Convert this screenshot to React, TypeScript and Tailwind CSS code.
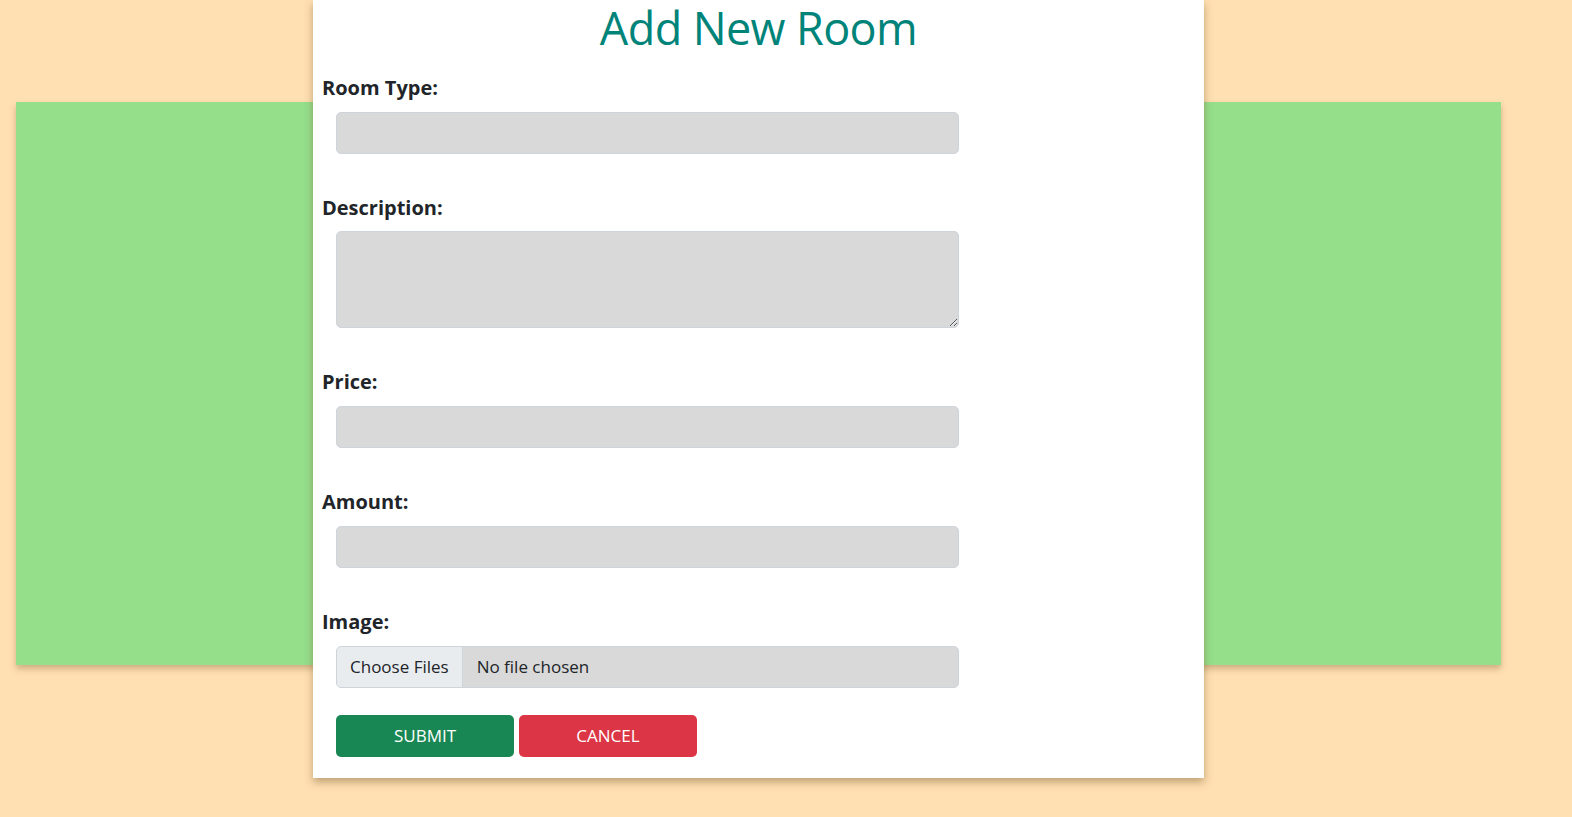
import React from 'react';

const font = { fontFamily: '"Open Sans", "Noto Sans", sans-serif' };

function Field({ label, children }: { label: string; children: React.ReactNode }) {
  return (
    <div className="flex flex-col">
      <label className="text-[20px] leading-[24px] font-bold text-[#212529]">{label}</label>
      <div className="mt-[12px] ml-[14px] w-[623px]">{children}</div>
    </div>
  );
}

const inputCls =
  'block w-full h-[42px] rounded-[5px] border border-[#ced4da] bg-[#d9d9d9] px-3 text-[17px] text-[#212529] outline-none';

export default function App() {
  return (
    <div className="min-h-[817px] w-full bg-[#ffe0b2] text-[#212529]" style={font}>
      <div className="relative w-[1485px] ml-[16px]">
        <div className="pt-[102px]">
          <div className="h-[563px] bg-[#95df8b] shadow-[0_4px_6px_rgba(120,90,40,0.35)]" />
        </div>

        {/* form card sits over the green panel */}
        <div className="absolute top-0 left-[297px] w-[891px] bg-white shadow-[0_4px_8px_rgba(110,80,40,0.45)] px-[9px] pb-[21px]">
          <h1 className="text-center text-[45px] leading-[56px] text-[#00847a] font-medium tracking-[-0.6px]">
            Add New Room
          </h1>

          <form className="mt-[20px] flex flex-col gap-[42px]" onSubmit={(e) => e.preventDefault()}>
            <Field label="Room Type:">
              <input type="text" className={inputCls} />
            </Field>

            <Field label="Description:">
              <textarea className="-mt-px block w-full h-[97px] rounded-[5px] border border-[#ced4da] bg-[#d9d9d9] px-3 py-2 text-[17px] outline-none" />
            </Field>

            <Field label="Price:">
              <input type="text" className={inputCls} />
            </Field>

            <Field label="Amount:">
              <input type="text" className={inputCls} />
            </Field>

            <Field label="Image:">
              <div className="flex h-[42px] items-stretch overflow-hidden rounded-[5px] border border-[#ced4da] bg-[#d9d9d9] text-[17px] text-[#212529]">
                <span className="flex items-center bg-[#e9ecef] px-[13px] border-r border-[#ced4da]">
                  Choose Files
                </span>
                <span className="flex items-center pl-[14px]">No file chosen</span>
              </div>
            </Field>
          </form>

          <div className="mt-[27px] ml-[14px] flex gap-[5px]">
            <button className="h-[42px] w-[178px] rounded-[5px] bg-[#198754] text-[17px] text-white">
              SUBMIT
            </button>
            <button className="h-[42px] w-[178px] rounded-[5px] bg-[#dc3545] text-[17px] text-white">
              CANCEL
            </button>
          </div>
        </div>
      </div>
    </div>
  );
}
